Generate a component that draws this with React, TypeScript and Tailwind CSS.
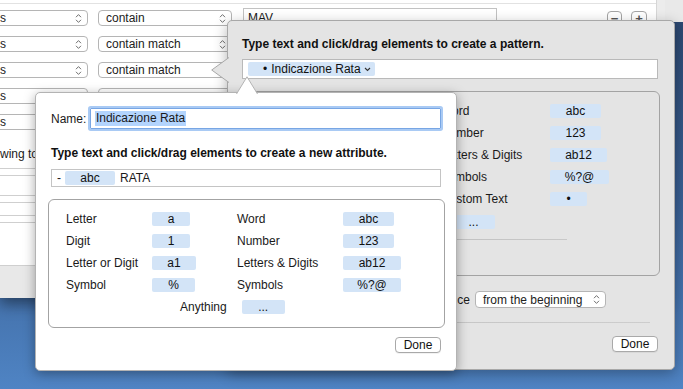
import React from "react";

type Kid = { children?: React.ReactNode };

function UpDown() {
  return (
    <svg width="7" height="11" viewBox="0 0 7 11" fill="none" stroke="#707070" strokeWidth="1">
      <path d="M1 4.2 L3.5 1.6 L6 4.2" />
      <path d="M1 6.8 L3.5 9.4 L6 6.8" />
    </svg>
  );
}

function Popup({ children, className }: Kid & { className: string }) {
  return (
    <div
      className={`flex h-[16px] shrink-0 items-center justify-between rounded-[4px] border border-[#b5b5b5] bg-white pl-[7px] pr-[5px] text-[12px] leading-none text-[#222] ${className}`}
    >
      <span className="whitespace-nowrap">{children}</span>
      <UpDown />
    </div>
  );
}

function Token({ children, className }: Kid & { className: string }) {
  return (
    <span
      className={`flex h-[14px] items-center justify-center rounded-[2px] bg-[#d3e4f7] pb-px text-[12px] leading-none text-[#111] ${className}`}
    >
      {children}
    </span>
  );
}

function DoneButton() {
  return (
    <div className="flex h-[16px] w-[46px] items-center justify-center rounded-[4px] border border-[#a9a9a9] bg-white text-[12px] leading-none text-[#111] shadow-[0_1px_0_rgba(0,0,0,0.05)]">
      Done
    </div>
  );
}

function Label({ children }: Kid) {
  return <span className="whitespace-nowrap text-[12px] leading-none">{children}</span>;
}

// the left popup of each rule row; only its last letter shows at the window edge
function RuleRow({ op }: { op: string }) {
  return (
    <div className="flex h-[26px] items-center">
      <Popup className="-ml-[8px] w-[96px]">s</Popup>
      <Popup className="ml-[10px] w-[134px]">{op}</Popup>
    </div>
  );
}

function BackWindow() {
  return (
    <div className="flex h-[298px] w-[665px] shrink-0 flex-col bg-white shadow-[0_6px_14px_rgba(0,0,0,0.45)]">
      <div className="flex flex-1 overflow-hidden">
        <div className="flex w-[657px] flex-col border-r border-[#d6d6d6]">
          <div className="mt-[3px] h-px bg-[#e2e2e2]" />
          <div className="mt-px flex h-[26px] items-center">
            <Popup className="-ml-[8px] w-[96px]">s</Popup>
            <Popup className="ml-[10px] w-[134px]">contain</Popup>
            <div className="ml-[11px] flex h-[20px] w-[254px] items-center border border-[#c2c2c2] pl-[4px] text-[12px] leading-none">
              MAV
            </div>
            <div className="ml-[110px] flex h-[15px] w-[15px] items-center justify-center rounded-[4px] border border-[#a5a5a5] text-[13px] font-bold leading-none text-[#555]">
              −
            </div>
            <div className="ml-[9px] flex h-[15px] w-[16px] items-center justify-center rounded-[4px] border border-[#a5a5a5] text-[13px] font-bold leading-none text-[#555]">
              +
            </div>
          </div>
          <RuleRow op="contain match" />
          <RuleRow op="contain match" />
          <RuleRow op="" />
          <RuleRow op="" />
          <div className="h-[33px] pt-[12px]">
            <span className="block whitespace-nowrap text-[12px] leading-[15px]">wing to</span>
          </div>
          <div className="h-[7px] border-t border-[#cfcfcf]" />
          <div className="h-[21px] w-[300px] border-y border-[#cfcfcf]" />
          <div className="mt-[6px] h-[14px] w-[300px] border-y border-[#cfcfcf]" />
          <div className="mt-[6px] w-[300px] border-t border-[#cfcfcf]" />
        </div>
        <div className="flex-1 bg-[#ececec]" />
      </div>
      <div className="h-[33px] border-t border-[#cfcfcf] bg-[#e8e8e8]" />
    </div>
  );
}

function PatternPopover() {
  return (
    <div className="absolute left-[227px] top-[20px] flex h-[350px] w-[448px] flex-col rounded-[5px] border border-[#a8a8a8] bg-[#e4e4e4] pl-[14px] pr-[16px] pt-[16px] shadow-[0_4px_14px_rgba(0,0,0,0.3)]">
      <svg className="absolute -left-[17px] top-[36px]" width="18" height="26" viewBox="0 0 18 26">
        <path d="M18 0.5 L0.7 13 L18 25.5" fill="#e4e4e4" stroke="#a8a8a8" />
      </svg>
      <div className="text-[12px] font-bold leading-[15px] text-[#111]">
        Type text and click/drag elements to create a pattern.
      </div>
      <div className="mt-[7px] flex h-[20px] w-[416px] items-center border border-[#b9b9b9] bg-white pl-[5px]">
        <span className="flex h-[14px] w-[127px] items-center rounded-[2px] bg-[#d3e4f7] pl-[15px] text-[12px] leading-none text-[#111]">
          <span className="mr-[4px]">•</span>
          <span className="whitespace-nowrap">Indicazione Rata</span>
          <svg className="ml-[3px] mt-px" width="7" height="5" viewBox="0 0 7 5" fill="none" stroke="#333" strokeWidth="1.1">
            <path d="M1 1 L3.5 3.5 L6 1" />
          </svg>
        </span>
      </div>
      <div className="ml-px mt-[12px] flex h-[185px] w-[417px] flex-col rounded-[6px] border border-[#a3a3a3] pl-[197px] pt-[8px]">
        {/* left column sits under the attribute popover */}
        <div className="grid grid-cols-[109px_auto] auto-rows-[22px] items-center">
          <Label>Word</Label>
          <Token className="w-[51px]">abc</Token>
          <Label>Number</Label>
          <Token className="w-[51px]">123</Token>
          <Label>Letters &amp; Digits</Label>
          <Token className="w-[57px]">ab12</Token>
          <Label>Symbols</Label>
          <Token className="w-[59px]">%?@</Token>
          <Label>Custom Text</Label>
          <Token className="w-[37px]">•</Token>
        </div>
        <div className="ml-[11px] mt-px flex h-[22px] items-center">
          <Token className="w-[43px]">...</Token>
        </div>
        <div className="-ml-[106px] mt-[6px] h-px w-[232px] bg-linear-to-r from-transparent via-[#c2c2c2] to-[#c8c8c8]" />
      </div>
      <div className="mt-[15px] flex h-[17px] items-center pl-[214px]">
        <span className="w-[14px] whitespace-nowrap text-right text-[12px] leading-none">ce</span>
        <Popup className="ml-[5px] h-[17px] w-[131px]">from the beginning</Popup>
      </div>
      <div className="mt-[14px] h-px w-[400px] self-center bg-linear-to-r from-transparent via-[#c6c6c6] to-[#cdcdcd]" />
      <div className="mt-[13px] self-end">
        <DoneButton />
      </div>
    </div>
  );
}

function AttributePopover() {
  return (
    <div className="absolute left-[35px] top-[92px] flex h-[279px] w-[422px] flex-col rounded-[5px] border border-[#b3b3b3] bg-white px-[15px] pt-[15px] shadow-[0_3px_12px_rgba(0,0,0,0.35)]">
      <svg className="absolute -top-[17px] left-[200px]" width="22" height="18" viewBox="0 0 22 18">
        <path d="M0.5 18 L11 0.8 L21.5 18" fill="#ffffff" stroke="#b3b3b3" />
      </svg>
      <div className="flex h-[21px] items-center">
        <span className="w-[39px] text-[12px] leading-none">Name:</span>
        <div className="flex h-[21px] w-[352px] items-center rounded-[1px] border border-[#78a6e4] pl-[4px] shadow-[0_0_0_2px_#a9caf4]">
          <span className="bg-[#b3d4fd] px-px text-[12px] leading-[15px]">Indicazione Rata</span>
        </div>
      </div>
      <div className="mt-[17px] text-[12px] font-bold leading-[15px] text-[#111]">
        Type text and click/drag elements to create a new attribute.
      </div>
      <div className="mt-[8px] flex h-[18px] w-[390px] items-center border border-[#c4c4c4] pl-[5px] text-[12px] leading-none">
        <span className="w-[8px]">-</span>
        <Token className="w-[50px]">abc</Token>
        <span className="ml-[5px]">RATA</span>
      </div>
      <div className="-ml-[3px] mt-[12px] flex h-[129px] w-[397px] flex-col rounded-[6px] border border-[#a3a3a3] pl-[17px] pt-[8px]">
        <div className="grid grid-cols-[86px_85px_106px_auto] auto-rows-[22px] items-center">
          <Label>Letter</Label>
          <Token className="w-[38px]">a</Token>
          <Label>Word</Label>
          <Token className="w-[51px]">abc</Token>
          <Label>Digit</Label>
          <Token className="w-[38px]">1</Token>
          <Label>Number</Label>
          <Token className="w-[51px]">123</Token>
          <Label>Letter or Digit</Label>
          <Token className="w-[44px]">a1</Token>
          <Label>Letters &amp; Digits</Label>
          <Token className="w-[58px]">ab12</Token>
          <Label>Symbol</Label>
          <Token className="w-[43px]">%</Token>
          <Label>Symbols</Label>
          <Token className="w-[58px]">%?@</Token>
        </div>
        <div className="ml-[114px] flex h-[22px] items-center gap-[15px]">
          <Label>Anything</Label>
          <Token className="w-[43px]">...</Token>
        </div>
      </div>
      <div className="mt-[9px] self-end">
        <DoneButton />
      </div>
    </div>
  );
}

export default function App() {
  return (
    <div className="relative h-[389px] w-[683px] overflow-hidden bg-linear-to-b from-[#2b466e] via-[#395f93] to-[#4f84c4] font-['Liberation_Sans',Arial,sans-serif] text-[#1a1a1a]">
      <div className="flex items-start">
        <BackWindow />
        <div className="h-[22px] flex-1 bg-[#e9e9e9]" />
      </div>
      <PatternPopover />
      <AttributePopover />
    </div>
  );
}
